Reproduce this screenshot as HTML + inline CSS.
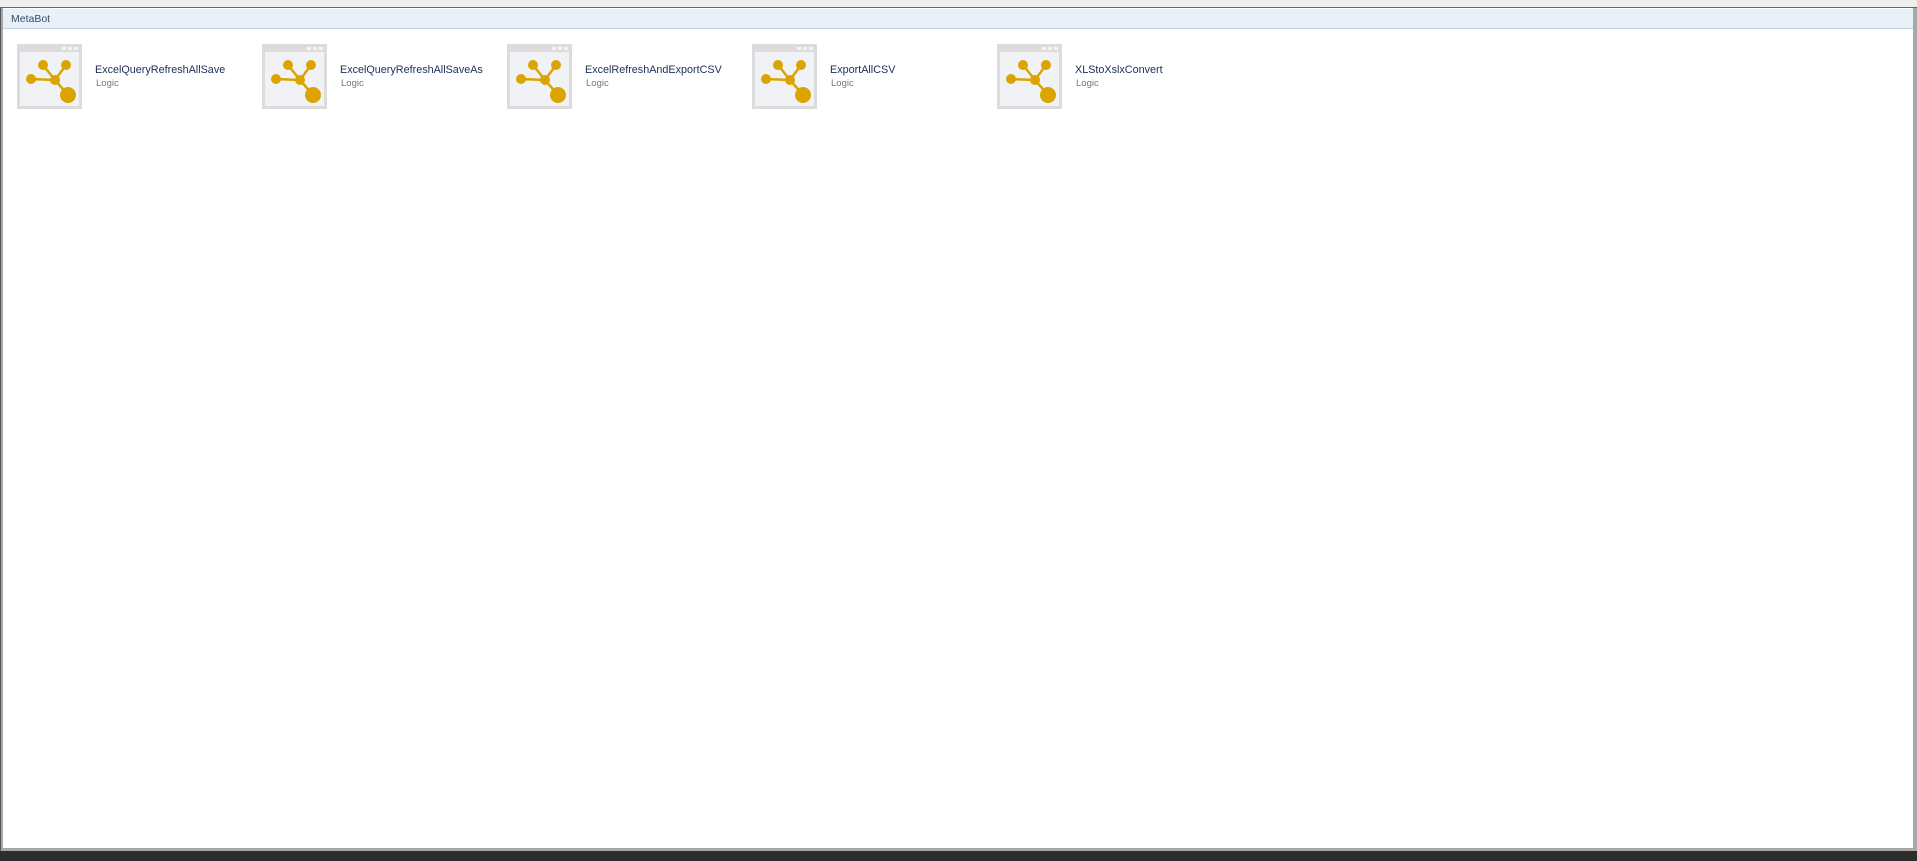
<!DOCTYPE html>
<html><head><meta charset="utf-8"><style>
*{margin:0;padding:0;box-sizing:border-box}
body{width:1917px;height:861px;background:#2d2d2d;position:relative;overflow:hidden;font-family:"Liberation Sans",Tahoma,sans-serif}
.top{position:absolute;left:0;top:0;width:1917px;height:7px;background:#efefef}
.line{position:absolute;left:0;top:7px;width:1917px;height:1px;background:#666}
.frame{position:absolute;left:0;top:8px;width:1917px;height:843px;background:#a8a8a8;border-left:1px solid #555}
.inner{position:absolute;left:2px;top:0;width:1910px;height:840px;background:#fff}
.hdr{position:absolute;left:0;top:1px;right:0;height:20px;background:#e8f0f8;border-bottom:1px solid #c8d4e6;font-size:10.5px;color:#3b4a6b;padding:4px 8px}
.item{position:absolute;top:36px}
.item svg{position:absolute;left:0;top:0}
.name{position:absolute;left:78px;top:20px;font-size:10.8px;color:#1d2d5a;white-space:nowrap}
.sub{position:absolute;left:79px;top:34px;font-size:9.5px;color:#777;white-space:nowrap}
</style></head><body>
<div class="top"></div><div class="line"></div>
<div class="frame"><div class="inner">
<div class="hdr">MetaBot</div>
<div id="items"></div>
</div></div>
<script>
var names=["ExcelQueryRefreshAllSave","ExcelQueryRefreshAllSaveAs","ExcelRefreshAndExportCSV","ExportAllCSV","XLStoXslxConvert"];
var h="";
names.forEach(function(n,i){
h+='<div class="item" style="left:'+(14+245*i)+'px"><svg width="65" height="65" viewBox="0 0 65 65"><rect width="65" height="65" fill="#dcdcdc"/><rect x="3" y="8" width="59" height="54" fill="#f1f2f6"/><rect x="45" y="3" width="4" height="3" fill="#f4f4f4"/><rect x="51" y="3" width="4" height="3" fill="#f4f4f4"/><rect x="57" y="3" width="4" height="3" fill="#f4f4f4"/><g stroke="#dba400" stroke-width="2.5"><line x1="14" y1="35" x2="38" y2="36"/><line x1="26" y1="21" x2="38" y2="36"/><line x1="49" y1="21" x2="38" y2="36"/><line x1="38" y1="36" x2="51" y2="51"/></g><g fill="#dba400"><circle cx="14" cy="35" r="5"/><circle cx="26" cy="21" r="5"/><circle cx="49" cy="21" r="5"/><circle cx="38" cy="36" r="5"/><circle cx="51" cy="51" r="8"/></g></svg><div class="name">'+n+'</div><div class="sub">Logic</div></div>';
});
document.getElementById("items").innerHTML=h;
</script>
</body></html>
